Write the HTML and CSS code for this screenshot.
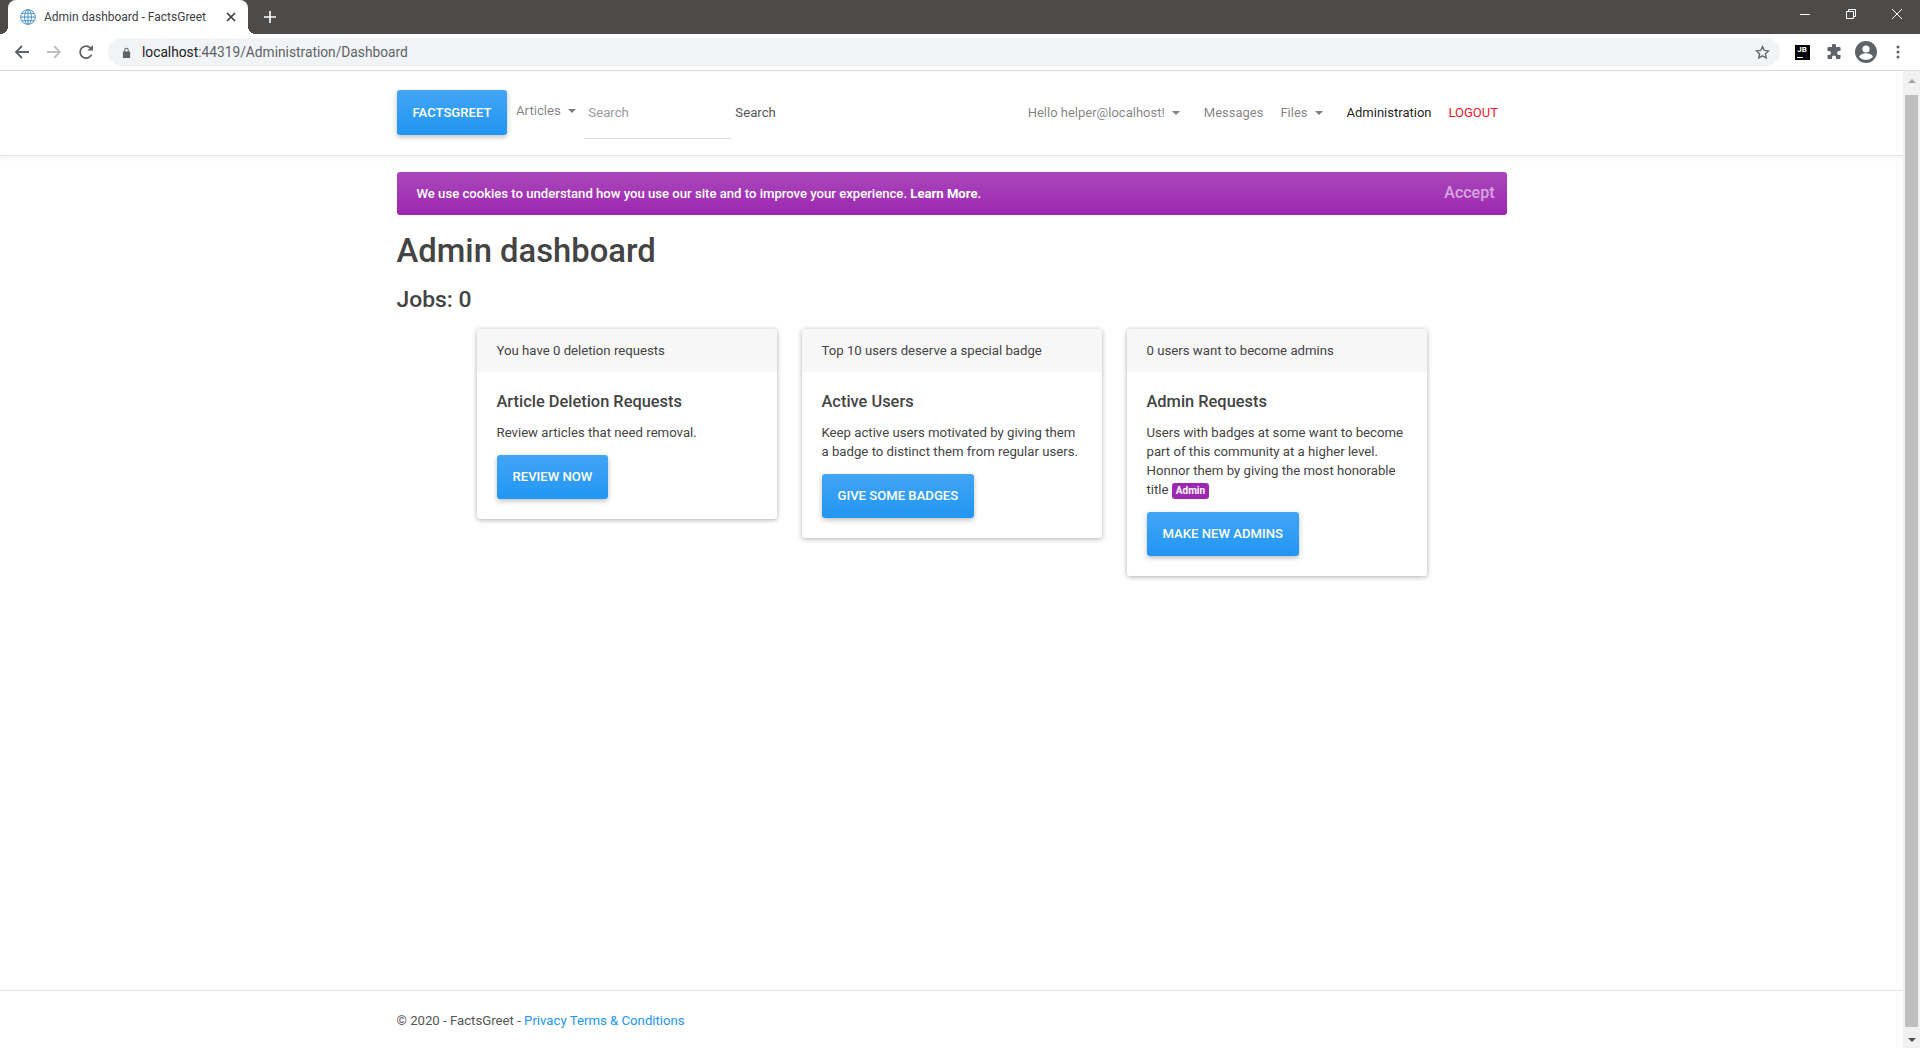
FILE: index.html
```html
<!DOCTYPE html>
<html lang="en">
<head>
    <meta charset="UTF-8">
    <title>Admin dashboard - FactsGreet</title>
    <link rel="stylesheet" href="styles.css">
</head>
<body>
    <div class="tabstrip">
        <div class="tab">
            <svg class="favicon" viewBox="0 0 16 16" width="16" height="16" fill="none" stroke="#4a90c8" stroke-width="1">
                <circle cx="8" cy="8" r="7.3"/>
                <ellipse cx="8" cy="8" rx="3.4" ry="7.3"/>
                <path d="M8 .7v14.6M.7 8h14.6M1.8 4.3h12.4M1.8 11.7h12.4"/>
            </svg>
            <span class="tab-title">Admin dashboard - FactsGreet</span>
            <svg class="tab-close" viewBox="0 0 10 10" width="10" height="10" stroke="#3c4043" stroke-width="1.7"><path d="M1 1l8 8M9 1l-8 8"/></svg>
        </div>
        <svg class="new-tab" viewBox="0 0 12 12" width="12" height="12" stroke="#fff" stroke-width="1.6"><path d="M6 0v12M0 6h12"/></svg>
        <div class="window-controls">
            <svg viewBox="0 0 10 10" width="10" height="10" stroke="#fff"><path d="M0 5.5h10"/></svg>
            <svg viewBox="0 0 10 10" width="10" height="10" fill="none" stroke="#fff"><path d="M.5 2.5h7v7h-7zM2.5 2.5v-2h7v7h-2"/></svg>
            <svg viewBox="0 0 10 10" width="10" height="10" stroke="#fff"><path d="M0 0l10 10M10 0L0 10"/></svg>
        </div>
    </div>

    <div class="toolbar">
        <svg class="tool-icon" viewBox="0 0 16 16" width="16" height="16" fill="none" stroke="#5f6368" stroke-width="1.8"><path d="M15 8H2M8 2L2 8l6 6"/></svg>
        <svg class="tool-icon" viewBox="0 0 16 16" width="16" height="16" fill="none" stroke="#bdbfc2" stroke-width="1.8"><path d="M1 8h13M8 2l6 6-6 6"/></svg>
        <svg class="tool-icon" viewBox="0 0 16 16" width="16" height="16" fill="none" stroke="#5f6368" stroke-width="1.8"><path d="M13.6 10.5A6 6 0 1 1 12.500 4L14 5.600"/><path d="M15 1v5.600H9.400" fill="#5f6368" stroke="none"/></svg>
        <div class="omnibox">
            <svg viewBox="0 0 10 12" width="9" height="11" fill="#5f6368"><path d="M1 5h8v7H1zM2.500 5V3.200a2.500 2.500 0 0 1 5 0V5H6.400V3.200a1.400 1.400 0 0 0-2.800 0V5z"/></svg>
            <span class="url"><span class="url-host">localhost</span>:44319/Administration/Dashboard</span>
            <svg class="star" viewBox="0 0 16 16" width="15" height="15" fill="none" stroke="#5f6368" stroke-width="1.4"><path d="M8 1.600l1.900 4.200 4.600.5-3.400 3.100.9 4.500-4-2.300-4 2.300.9-4.500L1.500 6.300l4.600-.5z"/></svg>
        </div>
        <div class="extensions">
            <div class="ext"><div class="jb-icon"><span>JB</span><i></i></div></div>
            <div class="ext"><svg viewBox="0 0 16 16" width="16" height="16" fill="#5f6368"><path d="M6 1.500a2 2 0 0 1 4 0V3h3.500a1 1 0 0 1 1 1v3H13a2 2 0 0 0 0 4h1.500v3a1 1 0 0 1-1 1H10v-1.500a2 2 0 0 0-4 0V15H2.500a1 1 0 0 1-1-1v-3H3a2 2 0 0 0 0-4H1.500V4a1 1 0 0 1 1-1H6z"/></svg></div>
            <div class="ext"><svg viewBox="0 0 22 22" width="22" height="22"><circle cx="11" cy="11" r="11" fill="#5f6368"/><circle cx="11" cy="8" r="3.600" fill="#fff"/><path d="M4 15.500c1.500-2.600 4.400-3.300 7-3.300s5.500.7 7 3.300a9 9 0 0 1-14 0z" fill="#fff"/></svg></div>
            <div class="ext"><svg viewBox="0 0 4 14" width="4" height="14" fill="#5f6368"><circle cx="2" cy="2" r="1.500"/><circle cx="2" cy="7" r="1.500"/><circle cx="2" cy="12" r="1.500"/></svg></div>
        </div>
    </div>

    <div class="viewport">
        <div class="page">
            <nav class="navbar">
                <div class="container nav-inner">
                    <a class="btn brand">FACTSGREET</a>
                    <a class="nav-link articles caret">Articles</a>
                    <input class="search-input" type="text" placeholder="Search">
                    <a class="search-btn">Search</a>
                    <div class="nav-right">
                        <a class="nav-link caret hello">Hello helper@localhost!</a>
                        <a class="nav-link">Messages</a>
                        <a class="nav-link caret files">Files</a>
                        <a class="nav-link active">Administration</a>
                        <a class="nav-link logout">LOGOUT</a>
                    </div>
                </div>
            </nav>

            <main class="container">
                <div class="cookie-banner">
                    <span>We use cookies to understand how you use our site and to improve your experience. <strong>Learn More</strong>.</span>
                    <span class="accept">Accept</span>
                </div>
                <h1>Admin dashboard</h1>
                <h2>Jobs: 0</h2>
                <div class="cards">
                    <div class="card">
                        <div class="card-header">You have 0 deletion requests</div>
                        <div class="card-body">
                            <h5>Article Deletion Requests</h5>
                            <p>Review articles that need removal.</p>
                            <a class="btn">REVIEW NOW</a>
                        </div>
                    </div>
                    <div class="card">
                        <div class="card-header">Top 10 users deserve a special badge</div>
                        <div class="card-body">
                            <h5>Active Users</h5>
                            <p>Keep active users motivated by giving them a badge to distinct them from regular users.</p>
                            <a class="btn">GIVE SOME BADGES</a>
                        </div>
                    </div>
                    <div class="card">
                        <div class="card-header">0 users want to become admins</div>
                        <div class="card-body">
                            <h5>Admin Requests</h5>
                            <p>Users with badges at some want to become part of this community at a higher level. Honnor them by giving the most honorable title <span class="badge">Admin</span></p>
                            <a class="btn">MAKE NEW ADMINS</a>
                        </div>
                    </div>
                </div>
            </main>

            <footer class="footer">
                <div class="container">© 2020 - FactsGreet - <a>Privacy</a> <a>Terms &amp; Conditions</a></div>
            </footer>
        </div>
        <div class="scrollbar">
            <i class="arrow-up"></i>
            <div class="thumb"></div>
            <i class="arrow-down"></i>
        </div>
    </div>
</body>
</html>
```

FILE: styles.css
```css
html, body {
    height: 100%;
    margin: 0;
    overflow: hidden;
}
body {
    font-family: Roboto, "Liberation Sans", sans-serif;
    font-size: 13.2px;
    color: #444;
    background: #fff;
    display: flex;
    flex-direction: column;
}

/* browser chrome */
.tabstrip {
    height: 34px;
    background: #4d4b49;
    display: flex;
    align-items: center;
    flex-shrink: 0;
}
.tab {
    width: 240px;
    height: 34px;
    margin-left: 8px;
    box-sizing: border-box;
    padding: 0 12px;
    background: #fff;
    border-radius: 8px 8px 0 0;
    display: flex;
    align-items: center;
    position: relative;
}
.tab::before, .tab::after {
    content: "";
    position: absolute;
    bottom: 0;
    width: 8px;
    height: 8px;
}
.tab::before {
    left: -8px;
    background: radial-gradient(circle at 0 0, transparent 8px, #fff 8px);
}
.tab::after {
    right: -8px;
    background: radial-gradient(circle at 100% 0, transparent 8px, #fff 8px);
}
.tab-title {
    margin-left: 8px;
    font-size: 12px;
    color: #3c4043;
    white-space: nowrap;
}
.tab-close {
    margin-left: auto;
}
.new-tab {
    margin-left: 16px;
}
.window-controls {
    margin-left: auto;
    margin-right: 18px;
    margin-top: -6px;
    display: flex;
    gap: 36px;
}
.toolbar {
    height: 36px;
    border-bottom: 1px solid #dadce0;
    display: flex;
    align-items: center;
    padding-left: 14px;
    flex-shrink: 0;
    background: #fff;
}
.tool-icon {
    margin-right: 16px;
}
.omnibox {
    width: 1672px;
    height: 28px;
    margin-left: -2px;
    box-sizing: border-box;
    padding: 0 10px 0 14px;
    background: #f1f3f4;
    border-radius: 14px;
    display: flex;
    align-items: center;
}
.url {
    margin-left: 11px;
    font-size: 13.75px;
    color: #5f6368;
}
.url-host {
    color: #202124;
}
.star {
    margin-left: auto;
}
.extensions {
    display: flex;
    align-items: center;
    margin-left: 6px;
}
.ext {
    width: 32px;
    display: flex;
    justify-content: center;
}
.jb-icon {
    width: 15px;
    height: 15px;
    background: #000;
    color: #fff;
    font-size: 8px;
    font-weight: 700;
    line-height: 9px;
    text-align: center;
    position: relative;
}
.jb-icon i {
    position: absolute;
    left: 2px;
    bottom: 2px;
    width: 6px;
    height: 1px;
    background: #fff;
}

/* page */
.viewport {
    flex: 1;
    display: flex;
    min-height: 0;
}
.page {
    flex: 1;
    display: flex;
    flex-direction: column;
    min-width: 0;
}
.container {
    width: 1110px;
    margin: 0 auto;
}
.scrollbar {
    width: 17px;
    background: #f1f1f1;
    display: flex;
    flex-direction: column;
    align-items: center;
}
.thumb {
    width: 13px;
    flex: 1;
    margin: 12px 0 11px;
    background: #bfbfbf;
}
.arrow-up, .arrow-down {
    width: 0;
    height: 0;
    border-left: 4px solid transparent;
    border-right: 4px solid transparent;
}
.arrow-up {
    margin-top: 8px;
    border-bottom: 4px solid #a3a3a3;
}
.arrow-down {
    margin-bottom: 6px;
    border-top: 4px solid #505050;
}

/* navbar */
.navbar {
    height: 84px;
    border-bottom: 1px solid #e2e2e2;
    box-shadow: 0 2px 6px rgba(0, 0, 0, 0.05);
    flex-shrink: 0;
}
.nav-inner {
    height: 82px;
    display: flex;
    align-items: center;
}
.btn {
    display: inline-block;
    height: 44px;
    line-height: 44px;
    padding: 0 16px;
    font-size: 13.125px;
    font-weight: 500;
    color: #fff;
    background: linear-gradient(180deg, #42a5f5, #2196f3);
    border-radius: 3px;
    box-shadow: 0 2px 5px rgba(0, 0, 0, 0.26);
}
.brand {
    height: 45px;
    line-height: 45px;
}
.nav-link {
    color: rgba(0, 0, 0, 0.5);
    padding: 0 8.5px;
    white-space: nowrap;
}
.articles {
    margin-top: -3px;
}
.caret::after {
    content: "";
    display: inline-block;
    margin-left: 7px;
    vertical-align: 2px;
    border-top: 4px solid rgba(0, 0, 0, 0.5);
    border-left: 4px solid transparent;
    border-right: 4px solid transparent;
}
.search-input {
    width: 147px;
    height: 52px;
    box-sizing: border-box;
    padding: 0 4px;
    border: 0;
    border-bottom: 1px solid #ddd;
    outline: none;
    font: 13.2px Roboto, sans-serif;
    margin-top: 1px;
    background: transparent;
}
.search-input::placeholder {
    color: #9a9a9a;
}
.search-btn {
    margin-left: 4px;
    color: #555;
}
.nav-right {
    margin-left: auto;
    display: flex;
    font-size: 13px;
}
.hello, .files {
    margin-right: 7px;
}
.active {
    color: rgba(0, 0, 0, 0.9);
}
.logout {
    color: #f5142d;
}

/* main */
.cookie-banner {
    height: 43px;
    margin-top: 16px;
    box-sizing: border-box;
    padding: 0 12px 0 20px;
    font-size: 13.125px;
    color: #fff;
    font-weight: 500;
    background: linear-gradient(180deg, #ab47bc, #9c27b0);
    border-radius: 3px;
    display: flex;
    align-items: center;
    justify-content: space-between;
}
.accept {
    font-size: 16px;
    opacity: 0.55;
    margin-top: -3px;
}
h1 {
    margin: 15px 0 15px;
    font-size: 32.8px;
    font-weight: 500;
    line-height: 42px;
}
h2 {
    margin: 0;
    font-size: 22.9px;
    font-weight: 500;
    line-height: 26px;
}
.cards {
    display: flex;
    justify-content: center;
    align-items: flex-start;
    gap: 25px;
    margin-top: 16px;
}
.card {
    width: 300px;
    border-radius: 3px;
    box-shadow: 0 1px 5px rgba(0, 0, 0, 0.32);
    overflow: hidden;
}
.card-header {
    height: 43px;
    line-height: 43px;
    padding: 0 20px;
    background: #f7f7f7;
}
.card-body {
    padding: 20px;
}
h5 {
    margin: 0 0 12px;
    font-size: 16.4px;
    font-weight: 500;
    line-height: 19px;
}
p {
    margin: 0 0 13px;
    line-height: 19px;
}
.badge {
    display: inline-block;
    padding: 0 4px;
    height: 16px;
    line-height: 16px;
    font-size: 10px;
    font-weight: 700;
    color: #fff;
    background: #9c27b0;
    border-radius: 3px;
}

/* footer */
.footer {
    margin-top: auto;
    height: 58px;
    box-sizing: border-box;
    border-top: 1px solid #e2e2e2;
    line-height: 59px;
    color: #555;
}
.footer a {
    color: #2196f3;
}
```
